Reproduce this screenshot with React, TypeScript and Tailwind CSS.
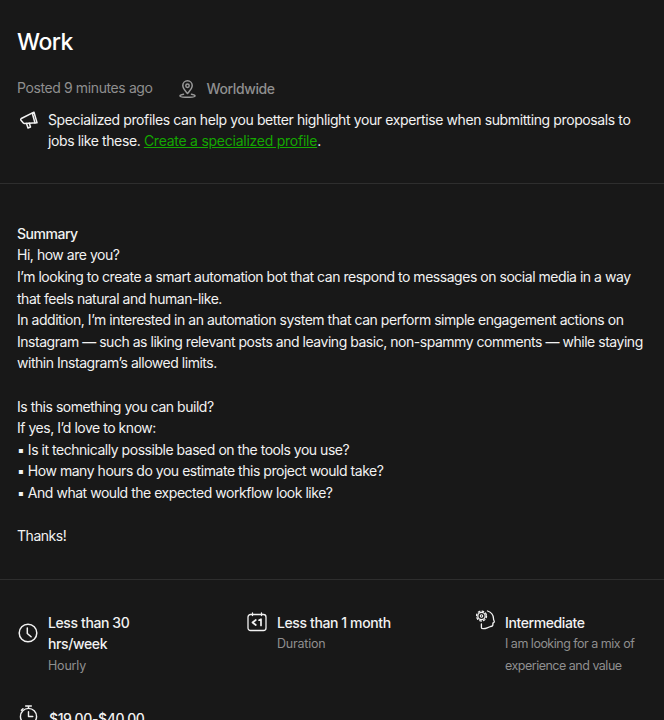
const lines = [
  "Hi, how are you?",
  "I’m looking to create a smart automation bot that can respond to messages on social media in a way that feels natural and human-like.",
  "In addition, I’m interested in an automation system that can perform simple engagement actions on Instagram — such as liking relevant posts and leaving basic, non-spammy comments — while staying within Instagram’s allowed limits.",
  "",
  "Is this something you can build?",
  "If yes, I’d love to know:",
  "▪ Is it technically possible based on the tools you use?",
  "▪ How many hours do you estimate this project would take?",
  "▪ And what would the expected workflow look like?",
  "",
  "Thanks!",
]

function Megaphone() {
  return (
    <svg viewBox="0 0 18 18" className="w-[18px] h-[18px] shrink-0" fill="none" stroke="#f2f2f2" strokeWidth="1.5" strokeLinejoin="round" strokeLinecap="round">
      <path d="M1.300 7.500 14 1.200l3 10.500-12.500.8a1.800 1.800 0 0 1-1.200-.6L1 9.300a1.300 1.300 0 0 1 .3-1.800Z" />
      <path d="M12.300 2.200 15 12" />
      <path d="m6.500 12.500 1.500 4.500 2.500-1-1.200-3.700" />
    </svg>
  )
}

function Pin() {
  return (
    <svg viewBox="0 0 18 18" className="w-[18px] h-[18px]" fill="none" stroke="#9a9a9a" strokeWidth="1.500" strokeLinecap="round" strokeLinejoin="round">
      <path d="M8.500 13.500C6 10.500 3.800 8.500 3.800 5.500a4.700 4.700 0 0 1 9.400 0c0 3-2.200 5-4.700 8Z" />
      <circle cx="8.500" cy="5.700" r="1.700" />
      <path d="M4.500 14.300c-2 .3-3.500.8-3.500 1.700 0 .9 3.400 1.300 7.500 1.300s7.500-.4 7.500-1.300c0-.9-1.500-1.400-3.500-1.700" />
    </svg>
  )
}

function Clock() {
  return (
    <svg viewBox="0 0 20 20" className="w-[20px] h-[20px]" fill="none" stroke="#f2f2f2" strokeWidth="1.500" strokeLinecap="round" strokeLinejoin="round">
      <circle cx="10" cy="10" r="8.800" />
      <path d="M9.300 5v5.500l3.800 3.300" />
    </svg>
  )
}

function CalendarLess() {
  return (
    <svg viewBox="0 0 20 20" className="w-[20px] h-[20px]" fill="none" stroke="#f2f2f2" strokeLinecap="round" strokeLinejoin="round">
      <rect x="1" y="2.500" width="18" height="16" rx="2.500" strokeWidth="1.300" />
      <path d="M5.500 1v2.500M14.500 1v2.500" strokeWidth="1.300" />
      <path d="M8.800 8 5.500 10.500l3.300 2.500" strokeWidth="1.700" />
      <path d="M12 8.200l2-1v6.300" strokeWidth="1.700" />
    </svg>
  )
}

function HeadGear() {
  return (
    <svg viewBox="0 0 19 20" className="w-[19px] h-[20px]" fill="none" stroke="#f2f2f2" strokeLinecap="round" strokeLinejoin="round">
      <circle cx="5.500" cy="6" r="3.700" strokeWidth="1.300" />
      <circle cx="5.500" cy="6" r="5" strokeWidth="1.300" strokeDasharray="1.600 2.330" />
      <circle cx="5.500" cy="6" r="1.200" strokeWidth="1.100" />
      <path d="M11.500 1c3.200 1 5.800 3.800 6 7.500-.1 1.700 1 2.500.8 3.300-.2.800-1 1-1.400 1.300v1.300c0 1.500-1.200 2.100-2.400 2.100l-3.300 1.400c-2.500 1-5.800 1.300-5.800-.5v-3.500" strokeWidth="1.300" />
    </svg>
  )
}

function Stopwatch() {
  return (
    <svg viewBox="0 0 20 22" className="w-[19px] h-[21px]" fill="none" stroke="#f2f2f2" strokeWidth="1.500" strokeLinecap="round" strokeLinejoin="round">
      <circle cx="10" cy="12" r="8.500" />
      <path d="M7 1h6M10 1v2.500M10 7v5h4.500M2.500 5.500 4.200 3.800" />
    </svg>
  )
}

export default function App() {
  return (
    <div className="h-[720px] w-[664px] overflow-hidden bg-[#181818] text-[14px] leading-[21.6px] tracking-[-0.39px] text-[#f2f2f2]" style={{ fontFamily: "Inter, sans-serif" }}>
      <section className="px-[17px] pt-[26px] pb-[31px] border-b border-[#2e2e2e]">
        <h1 className="text-[23px] leading-[32px] font-medium tracking-[-0.5px] text-white">Work</h1>
        <div className="mt-[17px] flex items-center text-[#8f8f8f]">
          <span>Posted 9 minutes ago</span>
          <span className="ml-[26px] mr-[10px] flex pt-[3px]"><Pin /></span>
          <span className="pt-[3px] font-medium">Worldwide</span>
        </div>
        <div className="mt-[9px] flex gap-[10px]">
          <span className="pl-[3px] pt-[2px]"><Megaphone /></span>
          <p>
            Specialized profiles can help you better highlight your expertise when submitting proposals to jobs like these.{" "}
            <a className="text-[#14a800] underline tracking-[-0.25px]">Create a specialized profile</a>.
          </p>
        </div>
      </section>

      <section className="px-[17px] pt-[39px] pb-[32px] border-b border-[#2e2e2e] tracking-[-0.47px]">
        <h2 className="font-medium">Summary</h2>
        {lines.map((t, i) => (
          <p key={i} className="min-h-[21.6px]">{t}</p>
        ))}
      </section>

      <section className="px-[17px] pt-[32px] grid grid-cols-[230px_228px_1fr]">
        <div className="flex items-start gap-[10px] self-start">
          <span className="pl-[1px] pt-[11px] flex"><Clock /></span>
          <div className="w-[110px]">
            <p className="font-medium">Less than 30 hrs/week</p>
            <p className="text-[12.5px] tracking-[-0.2px] text-[#8f8f8f]">Hourly</p>
          </div>
        </div>
        <div className="flex gap-[10px] items-start">
          <span className="flex"><CalendarLess /></span>
          <div>
            <p className="font-medium">Less than 1 month</p>
            <p className="text-[12.5px] tracking-[-0.2px] text-[#8f8f8f]">Duration</p>
          </div>
        </div>
        <div className="flex gap-[10px] items-start pl-[1px]">
          <span className="flex -mt-[2px]"><HeadGear /></span>
          <div className="w-[140px]">
            <p className="font-medium">Intermediate</p>
            <p className="text-[12.5px] tracking-[-0.5px] text-[#8f8f8f]">I am looking for a mix of experience and value</p>
          </div>
        </div>
        <div className="mt-[32px] flex gap-[11px] items-start col-span-3 pl-[2px]">
          <span className="flex -mt-[3px]"><Stopwatch /></span>
          <p className="font-medium">$19.00-$40.00</p>
        </div>
      </section>
    </div>
  )
}
